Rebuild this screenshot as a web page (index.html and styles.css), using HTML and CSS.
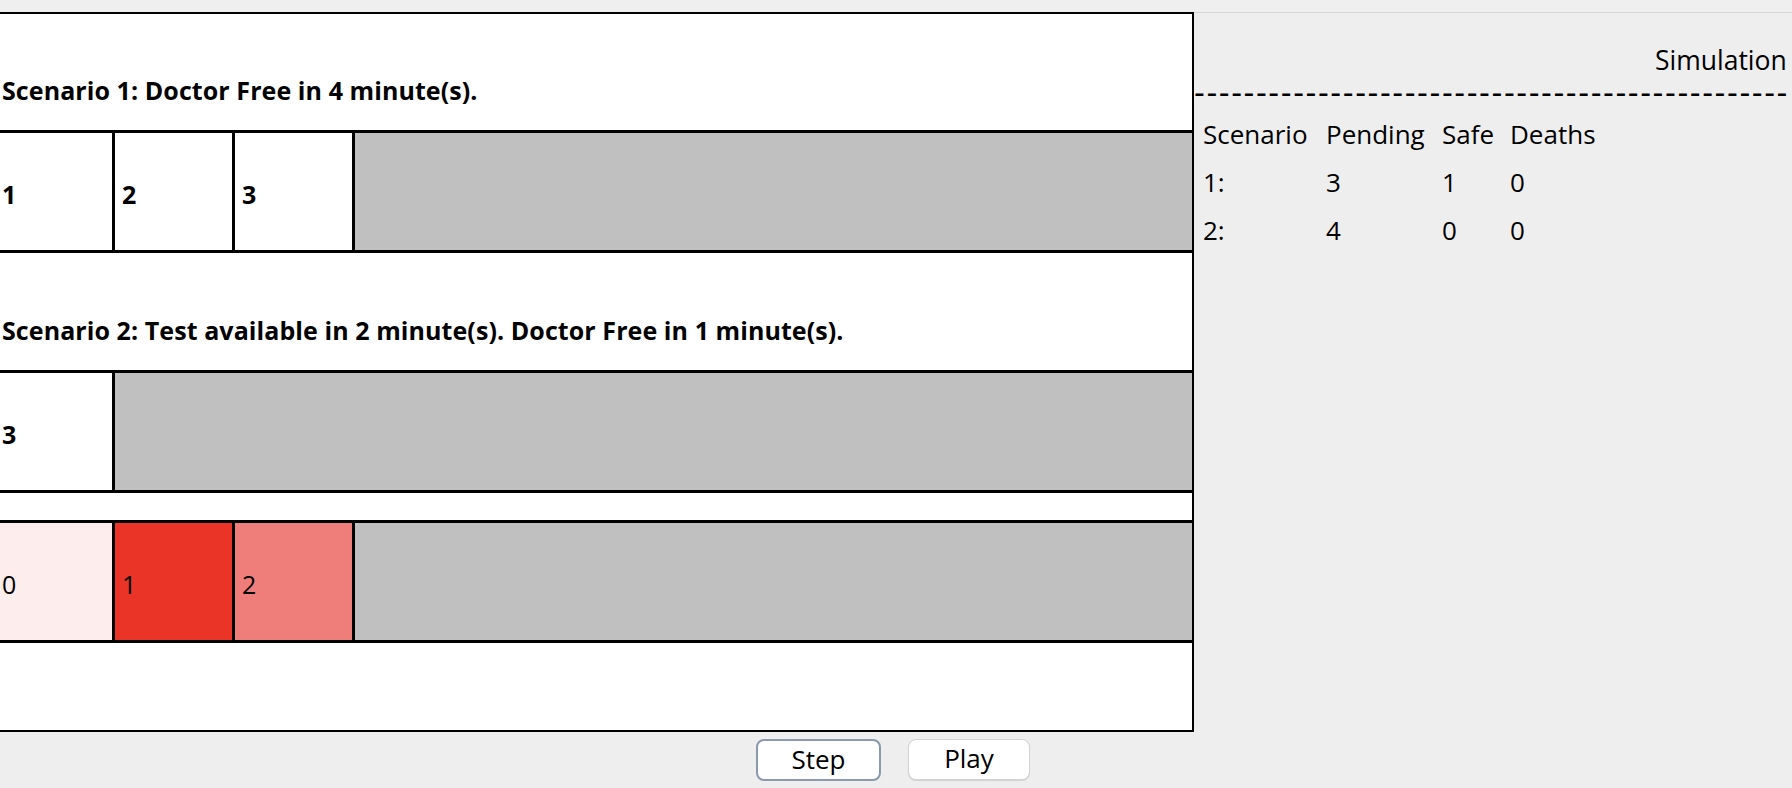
FILE: index.html
```html
<!DOCTYPE html>
<html lang="en">
<head>
<meta charset="utf-8">
<title>Simulation</title>
<link rel="stylesheet" href="styles.css">
</head>
<body>
<div class="window">
  <div class="topbar"></div>
  <div class="main">
    <div class="canvas">
      <div class="label label-first">Scenario 1: Doctor Free in 4 minute(s).</div>
      <div class="lane">
        <div class="cell">1</div>
        <div class="cell">2</div>
        <div class="cell">3</div>
        <div class="rest"></div>
      </div>
      <div class="label label-second">Scenario 2: Test available in 2 minute(s). Doctor Free in 1 minute(s).</div>
      <div class="lane">
        <div class="cell">3</div>
        <div class="rest"></div>
      </div>
      <div class="lane lane-test">
        <div class="cell cell-pale">0</div>
        <div class="cell cell-red">1</div>
        <div class="cell cell-salmon">2</div>
        <div class="rest"></div>
      </div>
    </div>
    <div class="side">
      <div class="side-title">Simulation</div>
      <div class="dashes">------------------------------------------------</div>
      <div class="stats">
        <div>Scenario</div><div>Pending</div><div>Safe</div><div>Deaths</div>
        <div>1:</div><div>3</div><div>1</div><div>0</div>
        <div>2:</div><div>4</div><div>0</div><div>0</div>
      </div>
    </div>
  </div>
  <div class="controls">
    <button class="btn btn-step">Step</button>
    <button class="btn btn-play">Play</button>
  </div>
</div>
</body>
</html>
```
FILE: styles.css
```css
html, body {
  margin: 0;
  padding: 0;
  width: 1792px;
  height: 788px;
  overflow: hidden;
  background: #eeeeee;
}

body {
  font-family: "Open Sans", "DejaVu Sans", sans-serif;
  color: #000;
}

.window {
  display: flex;
  flex-direction: column;
  width: 1792px;
  height: 788px;
}

.topbar {
  height: 12px;
  flex: none;
  background: #efefef;
}

.main {
  display: flex;
  height: 720px;
  flex: none;
}

.canvas {
  width: 1194px;
  flex: none;
  box-sizing: border-box;
  border: 2px solid #000;
  border-left: none;
  background: #fff;
  overflow: hidden;
  display: flex;
  flex-direction: column;
}

.label {
  flex: none;
  box-sizing: border-box;
  display: flex;
  align-items: flex-end;
  padding-left: 2px;
  padding-bottom: 23px;
  font-weight: 700;
  font-size: 25px;
  letter-spacing: 0.08px;
  line-height: 33px;
  white-space: nowrap;
}

.label-first { height: 116px; }
.label-second { height: 117px; }

.lane {
  display: flex;
  flex: none;
  height: 123px;
  box-sizing: border-box;
  border-top: 3px solid #000;
  border-bottom: 3px solid #000;
  margin-left: -5px;
}

.lane + .lane { margin-top: 27px; }

.cell {
  width: 120px;
  flex: none;
  box-sizing: border-box;
  border-right: 3px solid #000;
  display: flex;
  align-items: center;
  padding-left: 7px;
  padding-top: 4px;
  font-weight: 700;
  font-size: 25px;
  background: #fff;
}

.lane-test .cell { font-weight: 400; }
.cell-pale { background: #fdeeed; }
.cell-red { background: #ea3428; }
.cell-salmon { background: #ef7e7b; }

.rest {
  flex: 1;
  background: #c0c0c0;
}

.side {
  width: 700px;
  flex: none;
  box-sizing: border-box;
  border-top: 1px solid #d5d5d5;
  background: #eeeeee;
  overflow: hidden;
}

.side-title {
  margin-top: 32px;
  padding-left: 461px;
  font-size: 26.5px;
  line-height: 30px;
  white-space: nowrap;
}

.dashes {
  font-family: "DejaVu Sans", sans-serif;
  font-size: 30px;
  line-height: 35px;
  letter-spacing: 1.57px;
  white-space: nowrap;
}

.stats {
  margin-top: 0;
  padding-left: 9px;
  display: grid;
  grid-template-columns: 123px 116px 68px auto;
  grid-auto-rows: 48px;
  font-size: 26px;
  line-height: 48px;
}

.controls {
  flex: 1;
  display: flex;
  justify-content: center;
  align-items: flex-start;
  gap: 27px;
  padding-top: 7px;
  padding-right: 6px;
  box-sizing: border-box;
}

.btn {
  font-family: "Open Sans", "DejaVu Sans", sans-serif;
  font-size: 26px;
  color: #000;
  background: #fff;
  border-radius: 8px;
  padding: 0 0 6px 0;
  margin: 0;
  box-sizing: border-box;
}

.btn-step {
  width: 125px;
  height: 42px;
  border: 2px solid #8a99ae;
}

.btn-play {
  width: 122px;
  height: 41px;
  border: 1px solid #d3d3d3;
  box-shadow: 0 1px 1px rgba(0, 0, 0, 0.12);
}
```
